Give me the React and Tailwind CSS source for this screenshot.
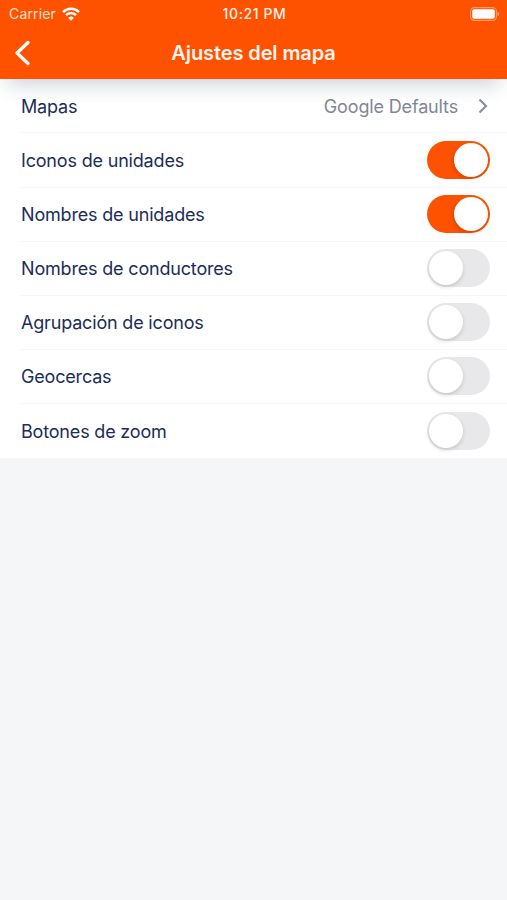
import React from "react";

const options = [
  { label: "Iconos de unidades", on: true },
  { label: "Nombres de unidades", on: true },
  { label: "Nombres de conductores", on: false },
  { label: "Agrupación de iconos", on: false },
  { label: "Geocercas", on: false },
  { label: "Botones de zoom", on: false },
];

function Toggle({ on }) {
  return (
    <span
      role="switch"
      aria-checked={on}
      className={`flex h-[38px] w-[63px] items-center rounded-full px-[2px] ${
        on ? "justify-end bg-[#ff5200]" : "justify-start bg-[#e8e8ea]"
      }`}
    >
      <span
        className={`size-[34px] rounded-full bg-white ${
          on ? "shadow-[-1px_2px_5px_rgba(0,0,0,0.16)]" : "shadow-[0_2px_4px_rgba(0,0,0,0.15)]"
        }`}
      />
    </span>
  );
}

function Row({ label, last, children }) {
  return (
    <li className="h-[54.1px] pl-[21px]">
      <div
        className={`flex h-full items-center justify-between pr-[17px] ${
          last ? "" : "border-b border-[#f5f5f6]"
        }`}
      >
        <span className="pt-[2px] text-[18px] leading-6 tracking-[-0.18px]">{label}</span>
        {children}
      </div>
    </li>
  );
}

function StatusBar() {
  return (
    <div className="grid h-[27px] grid-cols-3 items-center pl-[9px] pr-[7px] text-white">
      <div className="flex items-center gap-[6px]">
        <span className="text-[14px] tracking-[0.15px] text-[#ffe0d0]">Carrier</span>
        <svg width="18" height="14" viewBox="0 0 18 14" fill="none" stroke="currentColor" strokeWidth="2.4">
          <path d="M1 5.1a11.4 11.4 0 0 1 16 0" />
          <path d="M4 8.2a7.1 7.1 0 0 1 10 0" />
          <path d="M9 13.7 6.2 10.9a4 4 0 0 1 5.6 0Z" fill="currentColor" stroke="none" />
        </svg>
      </div>
      <span className="text-center text-[14px] font-medium tracking-[0.6px] text-[#fff0e8]">10:21 PM</span>
      <svg className="justify-self-end" width="30" height="14" viewBox="0 0 30 14">
        <rect x="0.6" y="0.6" width="25.8" height="12.8" rx="3.8" fill="none" stroke="#ff9a69" strokeWidth="1.1" />
        <rect x="2.2" y="2.2" width="22.6" height="9.6" rx="2" fill="#fff" />
        <path d="M27.5 4.8c2.2.8 2.2 3.6 0 4.4Z" fill="#ff9a69" />
      </svg>
    </div>
  );
}

export default function App() {
  return (
    <div className="min-h-screen w-full overflow-hidden bg-[#f5f6f8] font-['Inter','Liberation_Sans',sans-serif] text-[#1c2d57]">
      <header className="relative h-[79.4px] bg-[#ff5200] shadow-[0_14px_18px_-8px_rgba(50,70,110,0.24)]">
        <StatusBar />
        <div className="grid h-[52px] grid-cols-[60px_1fr_60px] items-center">
          <svg className="ml-[14px]" width="18" height="26" viewBox="0 0 18 26" fill="none" stroke="#fff" strokeWidth="3.3" strokeLinecap="round" strokeLinejoin="round">
            <path d="M14 2.5 3 13l11 10.5" />
          </svg>
          <h1 className="text-center text-[20px] font-semibold tracking-[-0.1px] text-[#fff4ee]">Ajustes del mapa</h1>
        </div>
      </header>
      <ul className="bg-white">
        <Row label="Mapas">
          <span className="flex items-center gap-[20px] text-[#7f8698]">
            <span className="pt-[2px] text-[18px] leading-6 tracking-[-0.15px]">Google Defaults</span>
            <svg className="mr-[2px] mt-px" width="10" height="16" viewBox="0 0 10 16" fill="none" stroke="#8f929c" strokeWidth="2.2">
              <path d="M1.5 1.5 8 8l-6.5 6.5" />
            </svg>
          </span>
        </Row>
        {options.map((o, i) => (
          <Row key={o.label} label={o.label} last={i === options.length - 1}>
            <Toggle on={o.on} />
          </Row>
        ))}
      </ul>
    </div>
  );
}
